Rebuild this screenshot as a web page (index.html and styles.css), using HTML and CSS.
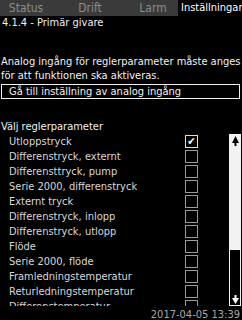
FILE: index.html
```html
<!DOCTYPE html>
<html lang="sv">
<head>
  <meta charset="UTF-8" />
  <title>4.1.4 - Primär givare</title>
  <link rel="stylesheet" href="styles.css">
</head>
<body>

<div class="screen">
  <div class="tabs">
    <div class="tab tab-status">Status</div>
    <div class="tab tab-drift">Drift</div>
    <div class="tab tab-larm">Larm</div>
    <div class="tab active">Inställningar</div>
  </div>

  <div class="title">4.1.4 - Primär givare</div>

  <p class="intro">Analog ingång för reglerparameter måste anges för att funktionen ska aktiveras.</p>

  <div class="goto">Gå till inställning av analog ingång</div>

  <div class="heading">Välj reglerparameter</div>

  <div class="listarea">
    <ul class="options">
      <li><span>Utloppstryck</span><i class="box checked">&#10004;</i></li>
      <li><span>Differenstryck, externt</span><i class="box"></i></li>
      <li><span>Differensttryck, pump</span><i class="box"></i></li>
      <li><span>Serie 2000, differenstryck</span><i class="box"></i></li>
      <li><span>Externt tryck</span><i class="box"></i></li>
      <li><span>Differenstryck, inlopp</span><i class="box"></i></li>
      <li><span>Differenstryck, utlopp</span><i class="box"></i></li>
      <li><span>Flöde</span><i class="box"></i></li>
      <li><span>Serie 2000, flöde</span><i class="box"></i></li>
      <li><span>Framledningstemperatur</span><i class="box"></i></li>
      <li><span>Returledningstemperatur</span><i class="box"></i></li>
      <li><span>Differenstemperatur</span><i class="box"></i></li>
    </ul>

    <div class="scrollbar">
      <div class="thumb">
        <svg width="9" height="12" viewBox="0 0 9 12"><path d="M4.5 1 L8 8 L1 8 Z M3.5 8 H5.5 V11 H3.5 Z" fill="#000"/></svg>
      </div>
      <div class="track">
        <svg width="9" height="11" viewBox="0 0 9 11"><path d="M3.5 1 H5.5 V4 H3.5 Z M1 4 L8 4 L4.5 10 Z" fill="#fff"/></svg>
      </div>
    </div>
  </div>

  <div class="clock">2017-04-05 13:39</div>
</div>

</body>
</html>
```

FILE: styles.css
```css
body {
  margin: 0;
  background-color: #000;
  font-family: "DejaVu Sans Condensed", "DejaVu Sans", sans-serif;
  font-size: 11px;
  color: #f2f2f2;
}
.screen {
  width: 242px;
  height: 320px;
  overflow: hidden;
}
.tabs {
  display: flex;
  height: 16px;
  background-color: #3a3a3a;
}
.tab {
  flex-shrink: 0;
  line-height: 16px;
  text-align: center;
  color: #8c8c8c;
  font-size: 12px;
}
.tab-status { width: 52px; }
.tab-drift { width: 76px; }
.tab-larm { width: 50px; }
.tab.active {
  flex: 1;
  min-width: 0;
  background-color: #000;
  color: #fff;
  font-size: 11px;
  text-align: left;
  padding-left: 3px;
  white-space: nowrap;
}
.title {
  height: 12px;
  line-height: 12px;
  padding-left: 2px;
  margin-top: 1px;
}
.intro {
  margin: 26px 0 0 0;
  padding-left: 1px;
  line-height: 14px;
}
.goto {
  margin: 1px 2px 0 1px;
  height: 13px;
  line-height: 13px;
  border: 1px solid #f2f2f2;
  padding-left: 7px;
}
.heading {
  margin-top: 20px;
  height: 15px;
  line-height: 15px;
  padding-left: 1px;
}
.listarea {
  display: flex;
  height: 173px;
}
.options {
  list-style: none;
  margin: 0;
  padding: 0;
  width: 229px;
  height: 172px;
  overflow: hidden;
}
.options li {
  display: flex;
  align-items: center;
  height: 15px;
  padding-left: 9px;
  color: #d8d8d8;
}
.options span {
  width: 176px;
  white-space: nowrap;
  overflow: hidden;
}
.box {
  width: 11px;
  height: 11px;
  border: 1px solid #9a9a9a;
  font-style: normal;
  font-size: 11px;
  line-height: 11px;
  text-align: center;
  color: #fff;
}
.box.checked {
  border-color: #e0e0e0;
}
.scrollbar {
  width: 10px;
  height: 170px;
  border: 1px solid #f2f2f2;
  display: flex;
  flex-direction: column;
}
.thumb {
  height: 115px;
  background-color: #f2f2f2;
  display: flex;
  justify-content: center;
}
.track {
  flex: 1;
  display: flex;
  justify-content: center;
  align-items: flex-end;
}
.clock {
  text-align: right;
  padding-right: 2px;
  margin-top: 2px;
  line-height: 12px;
  color: #a8a8a8;
}
```
